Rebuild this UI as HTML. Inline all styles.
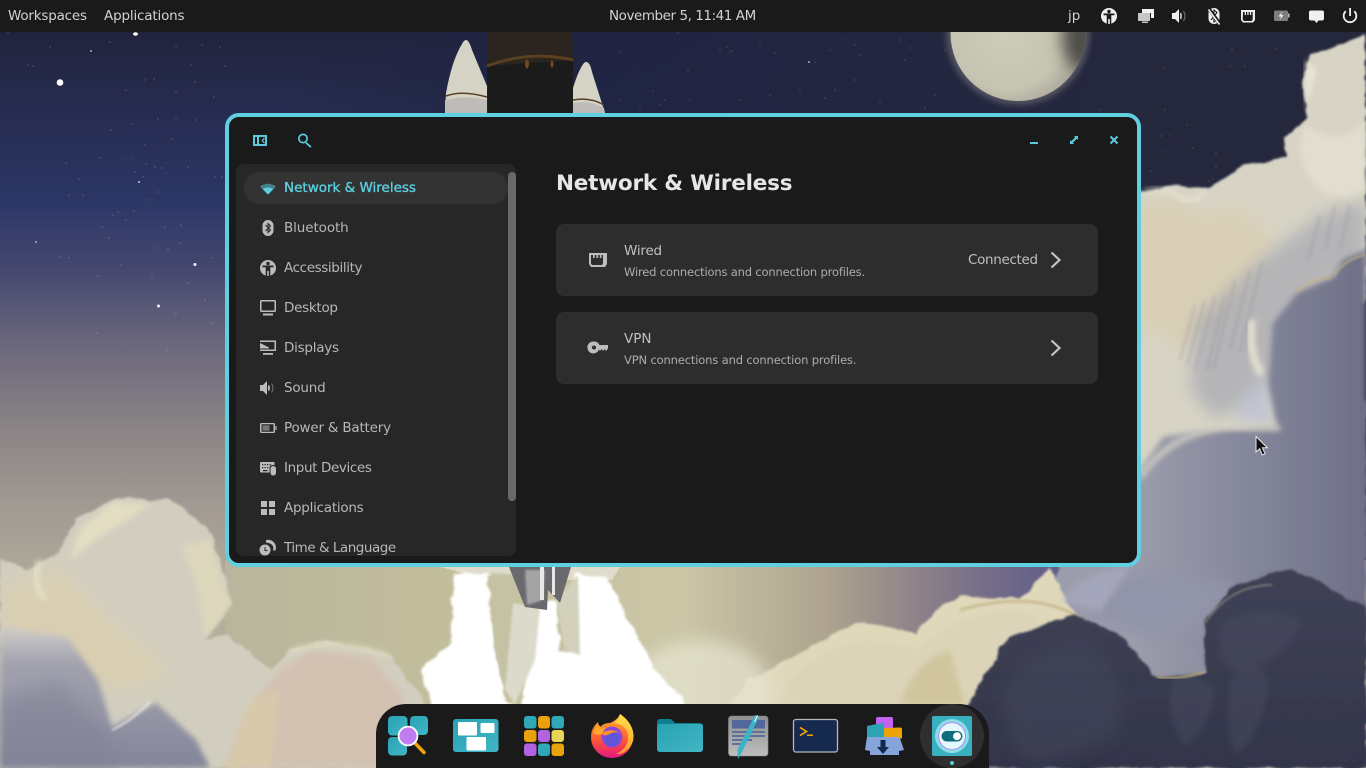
<!DOCTYPE html>
<html lang="en"><head><meta charset="utf-8"><title>Settings</title>
<style>
*{box-sizing:border-box}
html,body{margin:0;padding:0;width:1366px;height:768px;overflow:hidden;background:#2a2c45}
body{font-family:"DejaVu Sans","Liberation Sans",sans-serif;position:relative}
.t{position:absolute;white-space:nowrap;line-height:20px;height:20px}
.abs{position:absolute;display:block}
#top{position:absolute;left:0;top:0;width:1366px;height:32px;background:#1a1a1a}
#top .t{top:6px;color:#d2d2d2;font-size:13.5px}
#win{position:absolute;left:225px;top:113px;width:916px;height:454px;background:#1a1a1a;border:4px solid #5fd0e0;border-radius:14px}
#side{position:absolute;left:236px;top:164px;width:280px;height:392px;background:#272727;border-radius:8px;overflow:hidden}
#pill{position:absolute;left:8px;top:8px;width:264px;height:32px;border-radius:16px;background:#333}
#bar{position:absolute;left:272px;top:8px;width:8px;height:329px;border-radius:4px;background:#696969}
#side .t{left:48px;color:#b8b8b8;font-size:13.5px}
.card{position:absolute;left:556px;width:542px;height:72px;background:#2d2d2d;border-radius:8px}
.h{font-size:13.5px;color:#c0c0c0}
.s{font-size:11.5px;color:#adadad}
</style></head><body>

<svg class="abs" style="left:0;top:0" width="1366" height="768" viewBox="0 0 1366 768">
<defs>
<linearGradient id="sky" x1="0" y1="32" x2="0" y2="600" gradientUnits="userSpaceOnUse">
<stop offset="0" stop-color="#22243d"/><stop offset=".12" stop-color="#262b4e"/><stop offset=".3" stop-color="#2c3766"/><stop offset=".42" stop-color="#454870"/><stop offset=".55" stop-color="#6b677c"/><stop offset=".7" stop-color="#8a8486"/><stop offset=".85" stop-color="#a49c94"/><stop offset="1" stop-color="#b3ad9b"/>
</linearGradient>
<linearGradient id="skyR" x1="300" y1="0" x2="1150" y2="0" gradientUnits="userSpaceOnUse">
<stop offset="0" stop-color="#20243f" stop-opacity="0"/><stop offset=".3" stop-color="#1f2443" stop-opacity=".9"/><stop offset="1" stop-color="#25273d"/>
</linearGradient>
<linearGradient id="band" x1="225" y1="0" x2="1060" y2="0" gradientUnits="userSpaceOnUse">
<stop offset="0" stop-color="#b9b59c"/><stop offset=".3" stop-color="#c3bf9c"/><stop offset=".55" stop-color="#cbc6a6"/><stop offset=".72" stop-color="#aea38f"/><stop offset=".84" stop-color="#8b7f88"/><stop offset=".92" stop-color="#736b89"/><stop offset="1" stop-color="#5f5c88"/>
</linearGradient>
<linearGradient id="blueC" x1="0" y1="627" x2="0" y2="768" gradientUnits="userSpaceOnUse"><stop offset="0" stop-color="#cfcdc9"/><stop offset=".25" stop-color="#a3a3af"/><stop offset="1" stop-color="#83859a"/></linearGradient>
<linearGradient id="darkC" x1="0" y1="590" x2="0" y2="768" gradientUnits="userSpaceOnUse"><stop offset="0" stop-color="#3f4155"/><stop offset="1" stop-color="#33354a"/></linearGradient>
<linearGradient id="greyR" x1="1130" y1="420" x2="1366" y2="420" gradientUnits="userSpaceOnUse"><stop offset="0" stop-color="#9c9dac"/><stop offset=".5" stop-color="#85879b"/><stop offset="1" stop-color="#6e7087"/></linearGradient>
<radialGradient id="moon" cx=".42" cy=".5" r=".6"><stop offset="0" stop-color="#cfccba"/><stop offset=".7" stop-color="#c6c3b1"/><stop offset="1" stop-color="#a5a396"/></radialGradient>
<clipPath id="mc"><circle cx="1018" cy="33.500" r="67.500"/></clipPath>
<filter id="b1" x="-20%" y="-20%" width="140%" height="140%"><feGaussianBlur stdDeviation="1"/></filter>
<filter id="b3" x="-30%" y="-30%" width="160%" height="160%"><feGaussianBlur stdDeviation="3"/></filter>
<filter id="b8" x="-60%" y="-60%" width="220%" height="220%"><feGaussianBlur stdDeviation="8"/></filter>
<filter id="rough" x="-2%" y="-2%" width="104%" height="104%" filterUnits="objectBoundingBox">
<feTurbulence type="fractalNoise" baseFrequency=".05 .09" numOctaves="3" seed="4" result="n"/>
<feDisplacementMap in="SourceGraphic" in2="n" scale="7" xChannelSelector="R" yChannelSelector="G"/>
<feGaussianBlur stdDeviation="1"/>
</filter>
</defs>

<rect width="1366" height="768" fill="url(#sky)"/>
<rect x="300" y="0" width="1066" height="560" fill="url(#skyR)"/>
<rect x="225" y="560" width="850" height="208" fill="url(#band)"/>

<!-- stars -->
<path fill="none" stroke="#fff" stroke-linecap="round" stroke-width="1" stroke-opacity=".5" d="M8 33h0M50 47h0M28 65h0M33 66h0M110 42h0M176 46h0M220 47h0M202 45h0M191 65h0M225 66h0M145 80h0M154 79h0M126 90h0M195 82h0M176 92h0M214 97h0M158 119h0M176 118h0M196 120h0M132 124h0M111 130h0M145 145h0M172 139h0M66 163h0M100 158h0M125 160h0M133 160h0M146 164h0M155 167h0M162 168h0M188 167h0M215 177h0M79 179h0M135 172h0M143 177h0M158 192h0M69 195h0M83 195h0M147 200h0M118 212h0M134 211h0M113 215h0M102 227h0M126 220h0M165 227h0M181 225h0M109 238h0M155 248h0M168 249h0M69 258h0M60 257h0M121 265h0M98 276h0M152 275h0M188 283h0M205 300h0M176 313h0M212 323h0M97 333h0M167 350h0M96 408h0M212 258h0M222 177h0M180 243h0"/>
<path fill="none" stroke="#fff" stroke-linecap="round" stroke-width="1" stroke-opacity=".4" d="M678 33h0M727 47h0M730 52h0M732 51h0M620 52h0M632 72h0M653 91h0M688 71h0M720 50h0M760 43h0M775 53h0M845 40h0M855 45h0M860 55h0M830 50h0M900 40h0M910 48h0M905 60h0M945 50h0M690 100h0M740 100h0M770 95h0M800 90h0M815 62h0M855 80h0M880 88h0M835 90h0M880 102h0M925 108h0M935 95h0M825 98h0M620 100h0M640 107h0M660 105h0M665 100h0M1100 110h0M1164 68h0M1232 49h0M1276 49h0M1230 66h0M1245 66h0M1165 110h0M1187 125h0M1161 136h0M1170 136h0M1193 148h0M1216 153h0M1163 152h0M1216 167h0M1213 179h0M1209 181h0M1151 171h0"/>
<circle cx="60" cy="82.500" r="3.300" fill="#fff"/><ellipse cx="135.500" cy="34" rx="2.500" ry="1.700" fill="#fff"/>
<circle cx="195" cy="264.500" r="1.500" fill="#f4f4ff"/><circle cx="158.500" cy="306" r="1.500" fill="#eef"/><circle cx="139" cy="182" r=".9" fill="#fff"/><circle cx="91" cy="51" r="1" fill="#aab"/><circle cx="36" cy="242" r="1" fill="#aab"/><circle cx="809" cy="62" r=".8" fill="#fff"/>

<!-- moon -->
<circle cx="1018" cy="33" r="72" fill="#8c8b88" opacity=".45" filter="url(#b3)"/>
<circle cx="1018" cy="33.500" r="67.500" fill="url(#moon)"/>
<g clip-path="url(#mc)"><ellipse cx="1082" cy="35" rx="20" ry="36" fill="#4f4e4a" filter="url(#b8)"/></g>

<!-- rocket -->
<path d="M466 40Q469 40 472 50L487 86V113H445L446 93Q452 60 462 44Q464 40 466 40Z" fill="#d5d3c6"/>
<path d="M445 100Q465 95 487 100V113H445Z" fill="#bdbcb8"/>
<path d="M446 96Q462 90 487 97" fill="none" stroke="#5a3f24" stroke-width="1.500"/>
<path d="M487 32H572L573 60 487 66Z" fill="#2c241e"/>
<path d="M487 66L488 113H573V60Z" fill="#1b1b1b"/>
<path d="M487 66Q530 50 573 60" fill="none" stroke="#59401f" stroke-width="3"/>
<ellipse cx="527" cy="64" rx="2" ry="4.500" fill="#6d4a22"/><ellipse cx="552" cy="64" rx="1.500" ry="3.500" fill="#6d4a22"/>
<path d="M586 62Q590 62 592 72L605 113H573V88Q578 72 582 66Q584 62 586 62Z" fill="#d5d3c6"/>
<path d="M573 103Q590 100 604 108L605 113H573Z" fill="#bdbcb8"/>
<path d="M573 100Q590 97 604 105" fill="none" stroke="#5a3f24" stroke-width="1.500"/>

<!-- right side clouds -->
<g filter="url(#rough)">
<path d="M1040 640L1060 560 1130 440 1366 400V768H1040Z" fill="url(#greyR)"/>
<path d="M1128 194L1142 192 1180 185 1210 188 1243 165 1287 157 1285 137 1308 118 1302 80 1310 55 1366 35V300L1300 360 1280 470 1128 480Z" fill="#d7d3c5"/>
</g>
<path d="M1135 205L1180 198 1205 215 1240 205 1275 240 1240 310 1180 350 1135 320Z" fill="#d9cfb6" filter="url(#b8)"/>
<path d="M1306 125Q1290 160 1320 190 1345 205 1366 190V120Q1340 150 1306 125Z" fill="#e2decf" filter="url(#b3)"/>
<path d="M1145 192Q1165 184 1180 198 1195 204 1205 192" fill="none" stroke="#efeada" stroke-width="4" opacity=".7" filter="url(#b3)"/>
<path d="M1306 60L1306 110 1316 70Z" fill="#ece7d6" filter="url(#b3)"/>
<!-- hatched shadow -->
<path d="M1195 320L1260 260 1320 215 1366 200V262L1300 300 1262 400 1215 418 1190 390Z" fill="#a3a5b0" opacity=".65" filter="url(#b8)"/>
<path d="M1195 305l-15 55M1205 300l-18 65M1215 295l-20 75M1225 295l-18 75M1235 280l-22 90M1250 270l-20 80M1262 262l-22 90M1320 215l-12 45M1335 205l-10 45M1350 205l-10 45" stroke="#7c7e8f" stroke-width="4" stroke-opacity=".14" fill="none" filter="url(#b1)"/>
<path d="M1252 320Q1248 355 1262 375" stroke="#ece8d4" stroke-width="8" fill="none" opacity=".85" filter="url(#b3)"/>
<path d="M1250 385Q1240 405 1232 420L1275 428Q1272 395 1265 380Z" fill="#bec3d6" opacity=".8" filter="url(#b8)"/>
<path d="M1366 250L1343 260 1333 277 1297 293 1273 323 1268 383 1277 427 1210 430 1163 437 1135 477 1135 640 1366 640Z" fill="url(#greyR)" filter="url(#b3)"/>
<path d="M1334 277Q1340 262 1366 254M1297 293Q1308 278 1332 278" fill="none" stroke="#c9b481" stroke-width="2" opacity=".7" filter="url(#b1)"/>
<path d="M1140 478Q1170 432 1230 427L1280 428" fill="none" stroke="#d8d4c6" stroke-width="6" opacity=".8" filter="url(#b3)"/>
<path d="M1100 580Q1150 560 1240 590L1220 610 1160 640 1090 620Z" fill="#9294a9" filter="url(#b8)"/>

<!-- cream lower-right clouds -->
<g filter="url(#rough)">
<path d="M732 704L746 682 855 622 916 633 942 605 960 597 1021 598 1050 567 1066 600 1076 616 1120 640 1140 690 1000 768H732Z" fill="#e0d8bb"/>
</g>
<path d="M780 704Q790 660 860 640 890 640 916 650 960 610 1020 610 1060 620 1040 680L1000 710Z" fill="#dcd4b8" filter="url(#b3)"/>
<path d="M900 704Q915 660 950 650 960 690 965 704Z" fill="#cbbf93" opacity=".7" filter="url(#b3)"/>
<path d="M960 610Q1030 590 1075 615 1100 640 1150 680" fill="none" stroke="#c6b78c" stroke-width="3" opacity=".8" filter="url(#b1)"/>
<path d="M1063 600Q1085 570 1130 567L1100 612Z" fill="#a4a6bb" filter="url(#b3)"/>

<!-- dark clouds -->
<g filter="url(#rough)">
<path d="M967 704L1008 637 1074 615 1117 633 1157 677 1205 673 1205 623 1231 587 1292 568 1366 608V768H950Z" fill="url(#darkC)"/>
</g>
<path d="M1000 700Q1020 650 1080 640 1130 670 1120 730 1060 768 1020 760Z" fill="#45485d" opacity=".5" filter="url(#b8)"/>
<path d="M1172 680Q1195 670 1215 690 1210 730 1185 745 1165 720 1172 680ZM1230 680Q1250 650 1270 680 1260 740 1235 755 1225 730 1230 680ZM1220 625Q1260 600 1300 620 1290 660 1240 670 1215 670 1220 625Z" fill="#4a4c60" opacity=".5" filter="url(#b3)"/>
<path d="M1205 623Q1230 585 1272 585" fill="none" stroke="#b5ad96" stroke-width="1.500" opacity=".6" filter="url(#b1)"/>
<path d="M1157 677Q1180 680 1205 672" fill="none" stroke="#bcae7d" stroke-width="2" filter="url(#b1)"/>

<!-- left beige cloud -->
<g filter="url(#rough)">
<path d="M0 557L27 570 58 553 76 520 116 498 170 500 210 530 232 603 205 640 228 635 272 670 290 650 326 640 388 653 424 700 440 768H0Z" fill="#d2cebf"/>
</g>
<path d="M80 530L112 502 150 504 135 515 95 540 70 560Z" fill="#e3ddc2" filter="url(#b3)"/>
<path d="M182 545L210 540 230 605 205 640 198 590Z" fill="#ddd7bc" filter="url(#b3)"/>
<path d="M0 590L60 570 110 620 170 670 130 690 90 680 0 625Z" fill="#dccfac" opacity=".7" filter="url(#b8)"/>
<path d="M40 560Q30 580 45 600" stroke="#ece7cf" stroke-width="6" fill="none" opacity=".7" filter="url(#b3)"/>

<!-- pink cloud -->
<path d="M250 707L277 673 312 650 370 657 402 693 412 768H223Z" fill="#d3c2b2" filter="url(#b3)"/>
<path d="M225 768L250 700 280 690 270 768Z" fill="#dbcda5" opacity=".6" filter="url(#b3)"/>
<path d="M290 652Q325 635 388 655" fill="none" stroke="#e6dfc0" stroke-width="3" filter="url(#b3)"/>

<!-- blue-grey left cloud -->
<path d="M0 627L67 637 98 680 112 727 156 703 196 740 210 768H0Z" fill="url(#blueC)" filter="url(#b3)"/>
<path d="M0 700L60 680 110 740 120 768H0Z" fill="#7d7f92" opacity=".45" filter="url(#b8)"/>
<path d="M112 730Q130 722 150 702" fill="none" stroke="#f2f2f2" stroke-width="2" opacity=".7" filter="url(#b1)"/>

<!-- exhaust -->
<ellipse cx="700" cy="690" rx="70" ry="50" fill="#e7e6d2" opacity=".7" filter="url(#b8)"/>
<path d="M441 567L620 567 612 580 540 580 470 575Z" fill="#dfdccb"/>
<g filter="url(#rough)">
<path d="M453 573L487 573 494 640 505 700 520 710 530 660 535 610 540 600 556 600 560 650 574 650 574 573 607 577 620 603 634 630 656 670 694 712H420L433 704 420 670 451 643Z" fill="#fff"/>
</g>
<path d="M491 573L520 575 515 640 505 690 495 650Z" fill="#c5c2a4" filter="url(#b1)"/>
<path d="M513 603L540 607 535 660 515 704 505 690Z" fill="#dcdacb" filter="url(#b1)"/>
<path d="M556 600L578 575 580 655 565 650Z" fill="#d3d1bc" filter="url(#b1)"/>
<path d="M509 567H571L560 603 548 590 547 610 525 607Z" fill="#6a6a6e"/>
<path d="M525 570H545L543 600 527 605Z" fill="#a4a4a6" filter="url(#b1)"/>
<path d="M540 567H544V600H540ZM552 567H555V595H552Z" fill="#e8e8e8"/>
</svg>

<!-- top bar -->
<div id="top">
<div class="t" style="left:8px;letter-spacing:-.2px">Workspaces</div>
<div class="t" style="left:104px;letter-spacing:-.17px">Applications</div>
<div class="t" style="left:609px;letter-spacing:-.45px">November 5, 11:41 AM</div>
<div class="t" style="left:1068px">jp</div>
<svg class="abs" style="left:0;top:0" width="1366" height="32" viewBox="0 0 1366 32">
<g fill="#f0f0f0">
<circle cx="1109" cy="16" r="8"/>
<g fill="#1a1a1a"><circle cx="1109" cy="11.500" r="1.700"/><path d="M1103.500 13.500h11v1.800h-3.200V24h-1.500v-5h-1.600v5h-1.500v-8.700h-3.200z"/></g>
<path d="M1138 13h12v8h-12z" fill="#c6c6c6"/><path d="M1142 9h12v9h-3v-5h-9z"/><path d="M1142 21.500h6v1.500h-6z" fill="#c6c6c6"/>
<path d="M1172 13h3l4-4v14l-4-4h-3z"/><path d="M1181 12.500q2 3.500 0 7l-1-.6v-5.800z" fill="#bbb"/><path d="M1183.500 11q3 5 0 10" fill="none" stroke="#666" stroke-width="1.300"/>
<path d="M1214 8a5.500 5.500 0 0 1 5.500 5.500v5a5.500 5.500 0 0 1-11 0v-5A5.500 5.500 0 0 1 1214 8z"/>
<path d="M1211 12l6 7.500-3 2.500v-12l3 2.500-6 7.500" fill="none" stroke="#1a1a1a" stroke-width="1.100"/>
<path d="M1209 9l11 15" stroke="#1a1a1a" stroke-width="3.500"/><path d="M1208.500 9.500l11 15" stroke="#f0f0f0" stroke-width="1.500"/>
<path d="M1241 10h14v10l-2 2.500h-10l-2-2.500z"/>
<path d="M1243 12h1.700v3h1.300v-3h1.300v3h1.300v-3h1.300v3h1.300v-3h1.500v7.500l-1 1.500h-8l-1-1.500z" fill="#1a1a1a"/>
<rect x="1274" y="10.500" width="14" height="10.500" rx="1.500" fill="#7d7d7d"/><rect x="1288" y="13.500" width="1.500" height="4" fill="#bbb"/><path d="M1282 11.500l-3.500 5h2.500l-1 3.500 3.500-5h-2.500z" fill="#f0f0f0"/>
<path d="M1311 10.500h11a2 2 0 0 1 2 2v6a2 2 0 0 1-2 2h-3.500l-2 2.500-2-2.500H1311a2 2 0 0 1-2-2v-6a2 2 0 0 1 2-2z"/>
<path d="M1349.200 8h1.800v8h-1.800z"/><path d="M1345.800 11.200a6.300 6.300 0 1 0 8.400 0" fill="none" stroke="#f0f0f0" stroke-width="1.800"/>
</g></svg>
</div>

<!-- window -->
<div id="win"></div>
<svg class="abs" style="left:225px;top:113px" width="916" height="60" viewBox="225 113 916 60">
<g fill="#5bcbdb" stroke="none">
<path fill-rule="evenodd" d="M253 135h14v11h-14zM255 137v7h2v-7zM259 137v7h6v-7z"/>
<path d="M264 137.500l-2.500 3 2.500 3 .9-.8-1.800-2.200 1.800-2.200z"/>
<path fill-rule="evenodd" d="M303 133.500a5 5 0 1 1-.001 10 5 5 0 0 1 .001-10zM303 135.200a3.300 3.300 0 1 0 .001 6.600 3.300 3.300 0 0 0-.001-6.600z"/>
<path d="M306.500 142l5 4.500-1.200 1.300-5-4.400z"/>
<rect x="1030" y="142" width="8" height="2"/>
<path d="M1070 140v4h4l-1.200-1.200 4-4L1078 140v-4h-4l1.200 1.200-4 4z"/>
</g>
<path d="M1110.500 136.500l7 7M1117.500 136.500l-7 7" stroke="#5bcbdb" stroke-width="2"/>
</svg>

<div id="side">
<div id="pill"></div><div id="bar"></div>
<div class="t" style="top:14px;color:#5bcfdf;-webkit-text-stroke:.35px #5bcfdf">Network &amp; Wireless</div>
<div class="t" style="top:54px;letter-spacing:-.1px">Bluetooth</div>
<div class="t" style="top:94px;letter-spacing:-.38px">Accessibility</div>
<div class="t" style="top:134px;letter-spacing:-.28px">Desktop</div>
<div class="t" style="top:174px;letter-spacing:-.25px">Displays</div>
<div class="t" style="top:214px;letter-spacing:-.2px">Sound</div>
<div class="t" style="top:254px;letter-spacing:-.2px">Power &amp; Battery</div>
<div class="t" style="top:294px;letter-spacing:-.38px">Input Devices</div>
<div class="t" style="top:334px;letter-spacing:-.25px">Applications</div>
<div class="t" style="top:374px;letter-spacing:-.47px">Time &amp; Language</div>
<svg class="abs" style="left:0;top:0" width="280" height="392" viewBox="236 164 280 392">
<path d="M260 186.500Q268 181 276 186.500L268 194.500Z" fill="#5bcfdf" opacity=".5"/>
<path d="M262.500 189Q268 186 273.500 189L268 194.500Z" fill="#5bcfdf"/>
<g fill="#bcbcbc">
<rect x="262.500" y="220" width="11" height="16" rx="5.500"/>
<path d="M265.500 225l5 5-2.500 2.500v-9l2.500 2.500-5 5" fill="none" stroke="#272727" stroke-width="1.100"/>
<circle cx="268" cy="268" r="8"/>
<g fill="#272727"><circle cx="268" cy="263.500" r="1.700"/><path d="M262.500 265.500h11v1.800h-3.200V276h-1.500v-5h-1.600v5h-1.500v-8.700h-3.200z"/></g>
<path fill-rule="evenodd" d="M261.500 300h13a1.500 1.500 0 0 1 1.500 1.500v9a1.500 1.500 0 0 1-1.500 1.500h-13a1.500 1.500 0 0 1-1.500-1.500v-9a1.500 1.500 0 0 1 1.500-1.500zM261.500 301.500v9h13v-9z"/>
<rect x="263" y="313.500" width="10" height="2"/>
<path fill-rule="evenodd" d="M260 340.500h16v10.500h-16v-1.500h14.500v-7.500H260z"/>
<path d="M260 343l9 4.500v1h-9z"/><rect x="263" y="353" width="10" height="1.800"/>
<path d="M260 385h3l4-4v14l-4-4h-3z"/><path d="M269 385q2 3 0 6l-1-.6v-4.800z"/><path d="M271.500 383.500q3 4.500 0 9" fill="none" stroke="#6b6b6b" stroke-width="1.200"/>
<path fill-rule="evenodd" d="M261.500 423h12a1.500 1.500 0 0 1 1.500 1.500v7a1.500 1.500 0 0 1-1.500 1.500h-12a1.500 1.500 0 0 1-1.500-1.500v-7a1.500 1.500 0 0 1 1.500-1.500zM261.500 424.300v7.400h12v-7.400z"/>
<rect x="262.500" y="425.300" width="7" height="5.400" fill="#777"/><rect x="275.400" y="426" width="1.200" height="4"/>
<path fill-rule="evenodd" d="M261 462h13.500v3h-2a3 3 0 0 0-3 3v4.500H261a1 1 0 0 1-1-1v-8.500a1 1 0 0 1 1-1zM262 464v1.300h1.300V464zM264.500 464v1.300h1.300V464zM267 464v1.300h1.300V464zM269.500 464v1.300h1.300V464zM262 467v1.300h1.300V467zM264.500 467v1.300h1.300V467zM267 467v1.300h1.300V467zM263 470v1.200h4.500V470z"/>
<rect x="270.500" y="466" width="5.500" height="9.500" rx="2.700"/>
<rect x="261" y="501" width="6" height="6"/><rect x="269" y="501" width="6" height="6"/><rect x="261" y="509" width="6" height="6"/><rect x="269" y="509" width="6" height="6"/>
<path d="M266 540a8 8 0 0 1 10 7.500c0 1-.2 2-.6 3h-2.400c1-3 0-5-2-6.500-2-1-4-1.500-5-1.500z"/>
<circle cx="265" cy="550" r="5.500"/><path d="M265 547v3.500h2.500" fill="none" stroke="#272727" stroke-width="1"/>
</g></svg>
</div>

<!-- content -->
<div class="t" style="left:556px;top:172px;height:24px;line-height:24px;font-size:21.500px;font-weight:bold;color:#e6e6e6;letter-spacing:-.2px">Network &amp; Wireless</div>
<div class="card" style="top:224px"></div>
<div class="card" style="top:312px"></div>
<div class="t h" style="left:624px;top:241px;letter-spacing:-.2px">Wired</div>
<div class="t s" style="left:624px;top:262px;letter-spacing:-.17px">Wired connections and connection profiles.</div>
<div class="t h" style="left:968px;top:250px;letter-spacing:-.33px">Connected</div>
<div class="t h" style="left:624px;top:329px">VPN</div>
<div class="t s" style="left:624px;top:350px;letter-spacing:-.15px">VPN connections and connection profiles.</div>
<svg class="abs" style="left:556px;top:224px" width="542" height="160" viewBox="556 224 542 160">
<g fill="#bdbdbd">
<path d="M589 253h18v11l-2 3h-14l-2-3z"/>
<path d="M591 255h2v3h1.700v-3h1.700v3h1.700v-3h1.700v3h1.700v-3h1.500v8.500l-1 1.500h-10l-1-1.500z" fill="#2d2d2d"/>
<path fill-rule="evenodd" d="M594 341.500a6 6 0 0 1 5.500 3.500h8.500v3.500l-2 2.500-1.500-2-1.500 2-1.500-2-1.500 2-1-1.500a6 6 0 1 1-5-8zM594 345.500a2 2 0 1 0 .001 4 2 2 0 0 0-.001-4z"/>
</g>
<path d="M1051.500 252.500l8 7.500-8 7.500M1051.500 340.500l8 7.500-8 7.500" fill="none" stroke="#c4c4c4" stroke-width="2.200"/>
</svg>

<!-- cursor -->
<svg class="abs" style="left:1254px;top:435px" width="16" height="24" viewBox="0 0 16 24"><path d="M2 1.500V17l3.700-3.300L8.300 20l2.800-1.200-2.700-6H13.400z" fill="#111" stroke="#e8e8e8" stroke-width="1"/></svg>

<!-- dock -->
<svg class="abs" style="left:376px;top:704px" width="613" height="64" viewBox="376 704 613 64">
<defs>
<linearGradient id="tl" x1="0" y1="0" x2="1" y2="1"><stop offset="0" stop-color="#2aa2b3"/><stop offset="1" stop-color="#40b6c5"/></linearGradient>
<linearGradient id="fox" x1="0" y1="0" x2="0" y2="1"><stop offset="0" stop-color="#ffb627"/><stop offset=".6" stop-color="#ff5534"/><stop offset="1" stop-color="#e31587"/></linearGradient>
<linearGradient id="foy" x1="0" y1="0" x2="0" y2="1"><stop offset="0" stop-color="#ffe24a"/><stop offset="1" stop-color="#ff9a28"/></linearGradient>
<linearGradient id="pap" x1="0" y1="0" x2="0" y2="1"><stop offset="0" stop-color="#8f8f8f"/><stop offset="1" stop-color="#bdbdbd"/></linearGradient>
</defs>
<path d="M376 768V734a30 30 0 0 1 30-30H959a30 30 0 0 1 30 30V768Z" fill="#1a1a1a"/>
<rect x="920" y="704" width="64" height="64" rx="32" fill="#2e2e2e"/>

<rect x="388" y="716" width="19.500" height="19.500" rx="4" fill="url(#tl)"/><rect x="410" y="716" width="18" height="19" rx="4" fill="url(#tl)"/><rect x="388" y="737" width="19" height="18.500" rx="4" fill="url(#tl)"/>
<path d="M414 742l10 10.500" stroke="#f0a30a" stroke-width="3.500" stroke-linecap="round"/>
<circle cx="408" cy="736" r="10.300" fill="#fff"/><circle cx="408" cy="736" r="8.500" fill="#c07df0"/>

<rect x="453" y="719" width="45.500" height="33" rx="3" fill="url(#tl)"/>
<rect x="458" y="722" width="19" height="13.500" rx="1" fill="#fff"/><rect x="480.500" y="723" width="14" height="10" rx="1" fill="#fff"/><rect x="466.500" y="737" width="19.500" height="13.500" rx="1" fill="#fff"/>

<g>
<rect x="524" y="716" width="12.500" height="12.500" rx="3" fill="#2fa8b8"/><rect x="538" y="716" width="12" height="12.500" rx="3" fill="#e9a20c"/><rect x="551.500" y="716" width="12.500" height="12.500" rx="3" fill="#2fa8b8"/>
<rect x="524" y="730" width="12.500" height="12" rx="3" fill="#e9a20c"/><rect x="538" y="730" width="12" height="12" rx="3" fill="#b363e0"/><rect x="551.500" y="730" width="12.500" height="12" rx="3" fill="#e8d555"/>
<rect x="524" y="743.500" width="12.500" height="12.500" rx="3" fill="#b363e0"/><rect x="538" y="743.500" width="12" height="12.500" rx="3" fill="#2fa8b8"/><rect x="551.500" y="743.500" width="12.500" height="12.500" rx="3" fill="#e9a20c"/>
</g>

<path d="M620 714C630 722 634 732 633 738A21 20.500 0 1 1 591 737C591 730 594 726 598 722L599 728C603 724 606 723 610 723C614 721 618 719 620 714Z" fill="url(#fox)"/>
<path d="M620 714C632 722 635 733 633 741C630 750 622 755 616 754C624 750 628 745 628 737C628 729 622 724 614 723C617 721 619 718 620 714Z" fill="url(#foy)"/>
<path d="M598 724L602 729 609 727 612 731 606 733 598 735 593 733Z" fill="#ffa82b"/>
<circle cx="612" cy="737" r="10.500" fill="#8c4bd6"/><circle cx="612" cy="739" r="7.500" fill="#5f55d8"/>
<path d="M601 733C607 730 614 729 620 733 616 731 611 733 608 735 605 736 603 735 601 733Z" fill="#ff8f2b"/>

<path d="M660 719h11l4 4h25a3 3 0 0 1 3 3v23a3 3 0 0 1-3 3h-40a3 3 0 0 1-3-3v-27a3 3 0 0 1 3-3z" fill="#0d7f8e"/>
<path d="M657 749v-22a3 3 0 0 1 3-3h40a3 3 0 0 1 3 3v22a3 3 0 0 1-3 3h-40a3 3 0 0 1-3-3z" fill="url(#tl)"/>

<rect x="728.500" y="716" width="39.500" height="40" rx="3" fill="url(#pap)" stroke="#8a8a8a" stroke-width=".6"/>
<rect x="732" y="720" width="33" height="8.500" fill="#52689a"/>
<path d="M732 732h33M732 736h33M732 740h20M732 744h11" stroke="#52689a" stroke-width="1.700"/>
<path d="M755 715L759 717 742 752 738 759 737.500 750Z" fill="#39b4c8"/>
<path d="M757 715l1 .6-3 6.500-1-.6z" fill="#e6fbff"/>

<rect x="793.500" y="719.500" width="44" height="32.500" rx="2.500" fill="#16294f" stroke="#b3b7bf" stroke-width="1.300"/>
<path d="M800 727.500l6.500 4-6.500 4" fill="none" stroke="#f0a30a" stroke-width="1.700"/><rect x="807" y="734.500" width="6" height="1.500" fill="#f0a30a"/>

<rect x="876" y="717" width="17" height="20" rx="2" fill="#c264ef"/>
<path d="M883 728l17-.5a2 2 0 0 1 2 2v9h-19z" fill="#efa30a"/>
<path d="M867 726l15-3a2 2 0 0 1 2 2v12h-17z" fill="#2ba4b4"/>
<path d="M867 737H899.500L904 750 899 751V755H870V751L865 750Z" fill="#86a4da"/>
<path d="M880.500 740h5v7h3.500l-6 7-6-7h3.500z" fill="#10294d"/>

<rect x="932" y="716" width="40" height="40" rx="2" fill="#39afbf"/>
<circle cx="952" cy="736" r="17" fill="#8adde6"/><circle cx="952" cy="736" r="14" fill="#b888ef"/><circle cx="952" cy="736" r="13" fill="#e3f9fc"/>
<rect x="941.500" y="731" width="21" height="10.500" rx="5.200" fill="#0e6c7b"/><circle cx="957" cy="736.200" r="4" fill="#fff"/>
<circle cx="952" cy="763" r="2" fill="#5bcfdf"/>
</svg>
</body></html>
